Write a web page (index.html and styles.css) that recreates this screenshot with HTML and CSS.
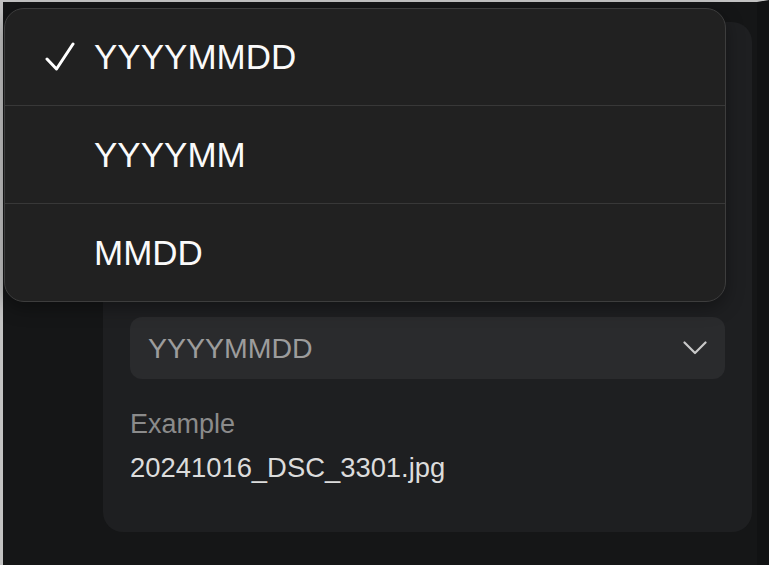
FILE: index.html
```html
<!DOCTYPE html>
<html lang="en">
<head>
    <meta charset="UTF-8">
    <meta name="viewport" content="width=device-width, initial-scale=1">
    <title>Date format</title>
    <link rel="stylesheet" href="styles.css">
</head>
<body>
    <div class="frame">
        <div class="panel">
            <div class="field-label">Date format</div>
            <div class="select">
                <span class="select-value">YYYYMMDD</span>
                <svg class="chevron" width="24" height="14" viewBox="0 0 24 14">
                    <path d="M1.5 1.5 L12 12 L22.5 1.5" fill="none" stroke="#c9c9c9" stroke-width="2.2" stroke-linecap="round" stroke-linejoin="round"/>
                </svg>
            </div>
            <div class="example-label">Example</div>
            <div class="example-value">20241016_DSC_3301.jpg</div>
        </div>

        <!-- open dropdown menu -->
        <div class="menu">
            <div class="menu-item">
                <span class="check">
                    <svg width="30" height="30" viewBox="0 0 30 30">
                        <path d="M2 17 L11.5 27 L28 2" fill="none" stroke="#fff" stroke-width="3" stroke-linecap="round" stroke-linejoin="round"/>
                    </svg>
                </span>
                <span>YYYYMMDD</span>
            </div>
            <div class="menu-item">
                <span class="check"></span>
                <span>YYYYMM</span>
            </div>
            <div class="menu-item">
                <span class="check"></span>
                <span>MMDD</span>
            </div>
        </div>
    </div>
</body>
</html>
```

FILE: styles.css
```css
html, body {
    height: 100%;
    margin: 0;
    font-family: 'Liberation Sans', Arial, sans-serif;
    background-color: #151617;
}

.frame {
    position: relative;
    box-sizing: border-box;
    height: 100%;
    border-top: 2px solid #c2c2c2;
    border-left: 3px solid #c2c2c2;
    border-right: 12px solid #111213;
    padding: 20px 0 0 100px;
}

.panel {
    box-sizing: border-box;
    width: 649px;
    height: 510px;
    background-color: #1e1f21;
    border-radius: 20px;
    padding: 250px 27px 0 27px;
}

.field-label {
    font-size: 27px;
    color: #8d8d8d;
    height: 45px;
}

.select {
    display: flex;
    align-items: center;
    justify-content: space-between;
    height: 62px;
    padding: 0 18px;
    background-color: #2a2b2d;
    border-radius: 12px;
}

.select-value {
    font-size: 28.5px;
    color: #9c9c9c;
}

.chevron {
    display: block;
}

.example-label {
    margin-top: 29px;
    font-size: 27px;
    line-height: 32px;
    color: #8b8b8b;
}

.example-value {
    margin-top: 12px;
    font-size: 27.4px;
    line-height: 32px;
    color: #dcdcdc;
}

.menu {
    position: absolute;
    top: 6px;
    left: 1px;
    width: 722px;
    box-sizing: border-box;
    background-color: #212121;
    border: 1px solid #3d3d3d;
    border-radius: 20px;
    overflow: hidden;
    box-shadow: 0 6px 18px rgba(0, 0, 0, 0.35);
}

.menu-item {
    display: flex;
    align-items: center;
    height: 97px;
    padding-left: 40px;
    font-size: 35px;
    color: #fafafa;
    border-top: 1px solid #383838;
}

.menu-item:first-child {
    border-top: none;
    height: 96px;
}

.check {
    display: flex;
    width: 30px;
    height: 30px;
    margin-right: 19px;
}
```
